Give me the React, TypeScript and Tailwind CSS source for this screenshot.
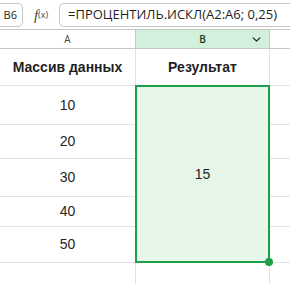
import { ChevronDown } from "lucide-react";

const rows = [
  { v: "10", h: "h-[39px]" },
  { v: "20", h: "h-[34px]" },
  { v: "30", h: "h-[38px]" },
  { v: "40", h: "h-[30px]" },
  { v: "50", h: "h-[36px]" },
];

export default function App() {
  return (
    <div className="h-[284px] w-[290px] overflow-hidden bg-white font-['Liberation_Sans',Arial,sans-serif] text-[#1f1f1f]">
      {/* formula bar */}
      <div className="flex h-[30px] items-center gap-[6px] border-b border-[#c4c7c5] pt-px">
        <div className="-ml-[8px] flex h-[24px] w-[31px] items-center justify-end rounded-[5px] border border-[#c4c7c5] pr-[5px] font-['Open_Sans',sans-serif] text-[11px]">
          B6
        </div>
        <div className="flex w-[24px] items-center justify-center font-['Liberation_Serif',serif] text-[15px] italic text-[#444746]">
          f<span className="not-italic font-['Open_Sans',sans-serif] text-[9px]">(x)</span>
        </div>
        <div className="flex h-[24px] flex-1 items-center rounded-l-[5px] border border-r-0 border-[#c4c7c5] pl-[8px] font-['Open_Sans',sans-serif] text-[13px] whitespace-nowrap">
          =ПРОЦЕНТИЛЬ.ИСКЛ(A2:A6; 0,25)
        </div>
      </div>

      {/* column headers */}
      <div className="grid h-[19px] grid-cols-[136px_134px_1fr] border-b border-[#c4c7c5] font-['Open_Sans',sans-serif] text-[10px] text-[#444746]">
        <div className="flex items-center justify-center border-r border-[#c4c7c5]">A</div>
        <div className="relative flex items-center justify-center border-r border-[#c4c7c5] bg-[#d3f0dc] font-semibold text-[#0d3b1c]">
          B
          <ChevronDown className="absolute right-[6px] top-[3px] h-[13px] w-[13px]" strokeWidth={2.5} />
        </div>
        <div />
      </div>

      {/* body */}
      <div className="grid grid-cols-[136px_134px_1fr]">
        <div className="flex flex-col">
          <div className="flex h-[37px] items-center justify-center border-b border-r border-[#e1e1e1] text-[14px] font-bold">
            Массив данных
          </div>
          {rows.map((r) => (
            <div key={r.v} className={`flex ${r.h} items-center justify-center border-b border-r border-[#e1e1e1] text-[14px]`}>
              {r.v}
            </div>
          ))}
          <div className="h-[30px] border-r border-[#e1e1e1]" />
        </div>
        <div className="flex flex-col">
          <div className="flex h-[37px] items-center justify-center border-b border-r border-[#e1e1e1] text-[14px] font-bold">
            Результат
          </div>
          <div className="relative -mt-px -ml-[1px] flex h-[178px] items-center justify-center border-2 border-[#1e9e48] bg-[#e6f7ea] text-[14px]">
            15
            <div className="absolute -bottom-[5px] -right-[5px] h-[8px] w-[8px] rounded-full bg-[#1e9e48]" />
          </div>
          <div className="h-[30px] border-r border-[#e1e1e1]" />
        </div>
        <div className="flex flex-col">
          <div className="h-[37px] border-b border-[#e1e1e1]" />
          {rows.map((r) => (
            <div key={r.v} className={`${r.h} border-b border-[#e1e1e1]`} />
          ))}
        </div>
      </div>
    </div>
  );
}
